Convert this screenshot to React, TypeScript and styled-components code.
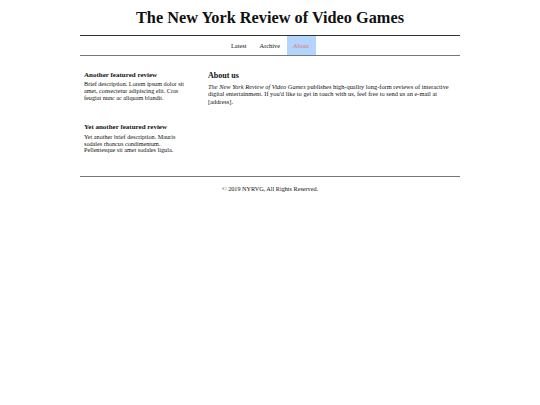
import styled, { createGlobalStyle } from "styled-components";

const GlobalStyle = createGlobalStyle`
  body {
    margin: 0;
    background: #fff;
    font-family: "Liberation Serif", "Times New Roman", serif;
    color: #111;
  }
`;

const Page = styled.div`
  width: 380px;
  margin: 0 auto;
  padding-top: 8px;
`;

const Title = styled.h1`
  margin: 0;
  height: 27px;
  font-size: 16.3px;
  line-height: 20px;
  font-weight: bold;
  text-align: center;
`;

const Nav = styled.nav`
  display: flex;
  justify-content: center;
  border-top: 1.5px solid #333;
  border-bottom: 1.5px solid #777;
`;

const NavLink = styled.a<{ active?: boolean }>`
  display: block;
  padding: 0 6.5px;
  height: 19px;
  line-height: 19px;
  font-size: 6.4px;
  color: ${({ active }) => (active ? "#e07b67" : "#111")};
  background: ${({ active }) => (active ? "#b3d4fc" : "transparent")};
  text-decoration: none;
`;

const Main = styled.main`
  display: grid;
  grid-template-columns: 106px 1fr;
  gap: 18px;
  padding: 14.5px 4px 22px;
  border-bottom: 1.5px solid #777;
`;

const Sidebar = styled.aside`
  display: flex;
  flex-direction: column;
  gap: 22px;
`;

const Feature = styled.div`
  h3 {
    margin: 0 0 2.6px;
    font-size: 7px;
    line-height: 8px;
    font-weight: bold;
  }
  p {
    margin: 0;
    font-size: 6.2px;
    line-height: 6.7px;
  }
`;

const About = styled.section`
  h2 {
    margin: 0 0 3.2px;
    font-size: 8px;
    line-height: 9px;
    font-weight: bold;
  }
  p {
    margin: 0;
    font-size: 6.4px;
    line-height: 7.5px;
  }
`;

const Footer = styled.footer`
  text-align: center;
  font-size: 6.2px;
  line-height: 7px;
  padding-top: 8.5px;
`;

export default function App() {
  return (
    <>
      <GlobalStyle />
      <Page>
        <Title>The New York Review of Video Games</Title>
        <Nav>
          <NavLink href="#">Latest</NavLink>
          <NavLink href="#">Archive</NavLink>
          <NavLink href="#" active>
            About
          </NavLink>
        </Nav>
        <Main>
          <Sidebar>
            <Feature>
              <h3>Another featured review</h3>
              <p>
                Brief description. Lorem ipsum dolor sit amet, consectetur
                adipiscing elit. Cras feugiat nunc ac aliquam blandit.
              </p>
            </Feature>
            <Feature>
              <h3>Yet another featured review</h3>
              <p>
                Yet another brief description. Mauris sodales rhoncus
                condimentum. Pellentesque sit amet sodales ligula.
              </p>
            </Feature>
          </Sidebar>
          <About>
            <h2>About us</h2>
            <p>
              <em>The New York Review of Video Games</em> publishes
              high-quality long-form reviews of interactive digital
              entertainment. If you'd like to get in touch with us, feel free
              to send us an e-mail at [address].
            </p>
          </About>
        </Main>
        <Footer>© 2019 NYRVG, All Rights Reserved.</Footer>
      </Page>
    </>
  );
}
